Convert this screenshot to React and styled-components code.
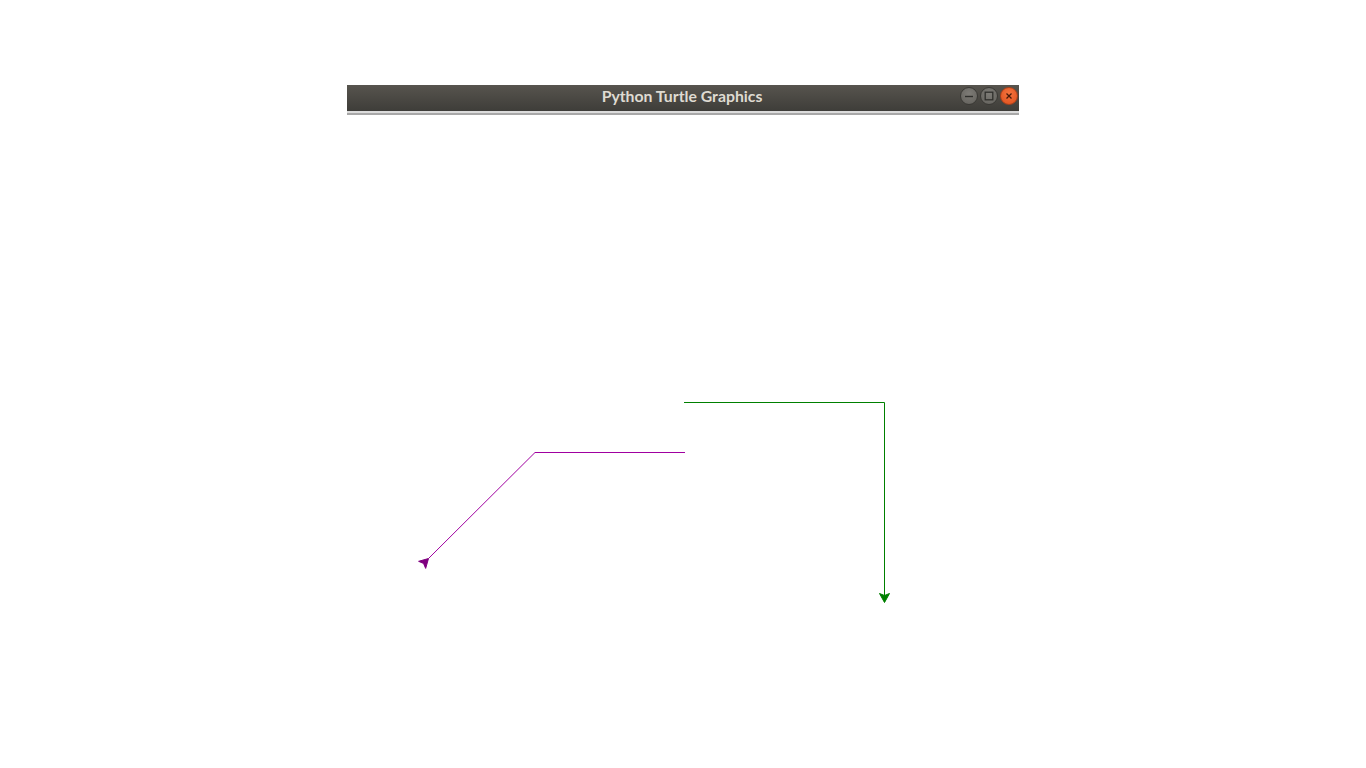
import React from "react";
import styled, { createGlobalStyle } from "styled-components";

const GlobalStyle = createGlobalStyle`
  html, body {
    margin: 0;
    padding: 0;
    background: #ffffff;
    overflow: hidden;
  }
`;

// turtle "classic" arrow: tip at the turtle position, body trailing behind
function arrowPoints(x, y, headingDeg) {
  const a = (headingDeg * Math.PI) / 180;
  const fx = Math.cos(a);
  const fy = -Math.sin(a);
  const px = -fy;
  const py = fx;
  const pt = (back, side) => `${x - fx * back + px * side},${y - fy * back + py * side}`;
  return [pt(0, 0), pt(9, 5), pt(7, 0), pt(9, -5)].join(" ");
}

const paths = [
  { color: "#008000", head: "#008000", points: "684,402.5 884.5,402.5 884.5,602", arrow: [884.5, 602.5, 270] },
  { color: "#a000a0", head: "#800080", points: "685,452.5 535,452.5 428.5,558.5", arrow: [428.5, 558.5, 45] },
];

function App() {
  return (
    <>
      <GlobalStyle />
      <Desktop>
        <Window>
          <TitleBar>
            <Title>Python Turtle Graphics</Title>
            <Controls>
              <WinButton aria-label="minimize">
                <svg width="10" height="10" viewBox="0 0 10 10">
                  <path d="M1 5.5h8" stroke="#2f2f2c" strokeWidth="1.4" />
                </svg>
              </WinButton>
              <WinButton aria-label="maximize">
                <svg width="10" height="10" viewBox="0 0 10 10">
                  <rect x="1.2" y="1.2" width="7.6" height="7.6" fill="none" stroke="#2f2f2c" strokeWidth="1.3" />
                </svg>
              </WinButton>
              <WinButton $close aria-label="close">
                <svg width="10" height="10" viewBox="0 0 10 10">
                  <path d="M2.5 2.5l5 5M7.5 2.5l-5 5" stroke="#4a1a08" strokeWidth="1.3" />
                </svg>
              </WinButton>
            </Controls>
          </TitleBar>
          <Canvas>
            <svg width="672" height="653" viewBox="347 115 672 653">
              {paths.map((p) => (
                <g key={p.color}>
                  <polyline points={p.points} fill="none" stroke={p.color} strokeWidth="1" />
                  <polygon
                    points={arrowPoints(...p.arrow)}
                    fill={p.head}
                    stroke={p.head}
                    strokeWidth="1"
                    strokeLinejoin="miter"
                  />
                </g>
              ))}
            </svg>
          </Canvas>
        </Window>
      </Desktop>
    </>
  );
}

const Desktop = styled.div`
  width: 1366px;
  height: 768px;
  padding: 85px 0 0 347px;
  box-sizing: border-box;
  background: #ffffff;
`;

const Window = styled.div`
  width: 672px;
  display: flex;
  flex-direction: column;
`;

const TitleBar = styled.div`
  position: relative;
  height: 26px;
  background: linear-gradient(#57544e, #3e3d39);
  border-bottom: 2px solid #dcdcdc;
  box-shadow: 0 2px 0 #a8a8a8;
  display: flex;
  align-items: center;
  justify-content: center;
`;

const Title = styled.span`
  font-family: Lato, "DejaVu Sans", sans-serif;
  font-weight: 700;
  font-size: 15.8px;
  line-height: 1;
  color: #dfdbd2;
  margin: 0 2px 4px 0;
`;

const Controls = styled.div`
  position: absolute;
  right: 1px;
  top: 2px;
  display: flex;
  gap: 2px;
`;

const WinButton = styled.div`
  width: 18px;
  height: 18px;
  border-radius: 50%;
  box-sizing: border-box;
  display: flex;
  align-items: center;
  justify-content: center;
  border: 1px solid ${(p) => (p.$close ? "#a8401a" : "#3a3935")};
  background: ${(p) =>
    p.$close
      ? "radial-gradient(circle at 50% 35%, #f5743e, #df4f1c)"
      : "radial-gradient(circle at 50% 35%, #7d7b76, #62605b)"};
`;

const Canvas = styled.div`
  margin-top: 2px;
  height: 653px;
  background: #ffffff;

  svg {
    display: block;
  }
`;

export default App;
